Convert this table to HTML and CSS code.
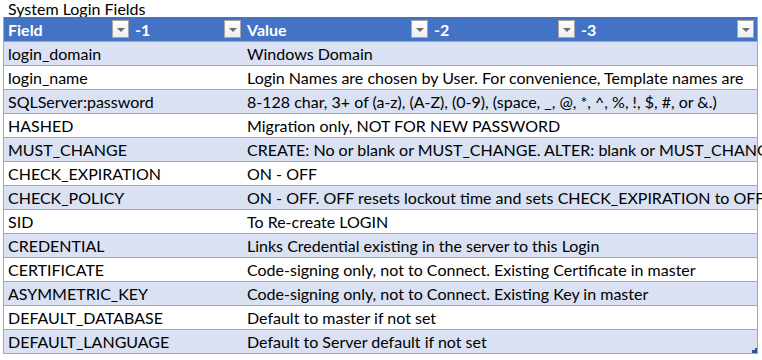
FILE: index.html
```html
<!DOCTYPE html>
<html lang="en">
<head>
    <meta charset="UTF-8">
    <title>System Login Fields</title>
    <link rel="stylesheet" href="styles.css">
</head>
<body>
    <div class="sheet">
        <div class="title">System Login Fields</div>
        <div class="table">
            <div class="row head">
                <div class="hcell">Field<span class="filter"></span></div>
                <div class="hcell">-1<span class="filter"></span></div>
                <div class="hcell">Value<span class="filter"></span></div>
                <div class="hcell">-2<span class="filter"></span></div>
                <div class="hcell">-3<span class="filter"></span></div>
            </div>
            <div class="row band"><div class="field">login_domain</div><div class="value">Windows Domain</div></div>
            <div class="row"><div class="field">login_name</div><div class="value">Login Names are chosen by User. For convenience, Template names are</div></div>
            <div class="row band"><div class="field">SQLServer:password</div><div class="value">8-128 char, 3+ of (a-z), (A-Z), (0-9), (space, _, @, *, ^, %, !, $, #, or &amp;.)</div></div>
            <div class="row"><div class="field">HASHED</div><div class="value">Migration only, NOT FOR NEW PASSWORD</div></div>
            <div class="row band"><div class="field">MUST_CHANGE</div><div class="value">CREATE: No or blank or MUST_CHANGE. ALTER: blank or MUST_CHANGE</div></div>
            <div class="row"><div class="field">CHECK_EXPIRATION</div><div class="value">ON - OFF</div></div>
            <div class="row band"><div class="field">CHECK_POLICY</div><div class="value">ON - OFF. OFF resets lockout time and sets CHECK_EXPIRATION to OFF</div></div>
            <div class="row"><div class="field">SID</div><div class="value">To Re-create LOGIN</div></div>
            <div class="row band"><div class="field">CREDENTIAL</div><div class="value">Links Credential existing in the server to this Login</div></div>
            <div class="row"><div class="field">CERTIFICATE</div><div class="value">Code-signing only, not to Connect. Existing Certificate in master</div></div>
            <div class="row band"><div class="field">ASYMMETRIC_KEY</div><div class="value">Code-signing only, not to Connect. Existing Key in master</div></div>
            <div class="row"><div class="field">DEFAULT_DATABASE</div><div class="value">Default to master if not set</div></div>
            <div class="row band last"><div class="field">DEFAULT_LANGUAGE</div><div class="value">Default to Server default if not set</div><span class="resize"></span></div>
        </div>
    </div>
</body>
</html>
```

FILE: styles.css
```css
body {
    margin: 0;
    font-family: Lato, "Open Sans", sans-serif;
    font-size: 16px;
    color: #000;
    background-color: white;
    overflow: hidden;
}
.sheet {
    width: 762px;
    height: 360px;
    overflow: hidden;
}
.title {
    height: 17px;
    line-height: 17px;
    padding-left: 8px;
    white-space: nowrap;
}
.table {
    margin-left: 3px;
    width: 753px;
    border-left: 1px solid #8ea9db;
    border-right: 1px solid #8ea9db;
}
.row {
    display: grid;
    grid-template-columns: 127px 112px 187px 147px 179px;
    height: 23px;
    border-bottom: 1px solid #8ea9db;
    position: relative;
    white-space: nowrap;
}
.row.band {
    background-color: #d9e1f2;
}
.row.head {
    background-color: #4472c4;
    color: white;
    font-weight: bold;
    height: 24px;
    border-bottom: 1px solid #8ea9db;
}
.hcell {
    display: flex;
    align-items: center;
    justify-content: space-between;
    padding-left: 4px;
    padding-right: 2px;
}
.filter {
    width: 15px;
    height: 16px;
    border: 1px solid #a6a6a6;
    background: linear-gradient(#ffffff, #eeeeee);
    position: relative;
}
.filter::after {
    content: "";
    position: absolute;
    left: 4px;
    top: 7px;
    border-left: 4px solid transparent;
    border-right: 4px solid transparent;
    border-top: 4px solid #6f6f6f;
}
.field,
.value {
    padding-left: 4px;
    line-height: 24px;
    overflow: visible;
}
.field {
    grid-column: 1 / 3;
}
.value {
    grid-column: 3 / 6;
}
.resize {
    position: absolute;
    right: 0;
    bottom: 0;
    width: 5px;
    height: 5px;
    background-color: #2f5597;
    clip-path: polygon(100% 0, 100% 100%, 0 100%, 0 40%, 60% 40%, 60% 0);
}
```
